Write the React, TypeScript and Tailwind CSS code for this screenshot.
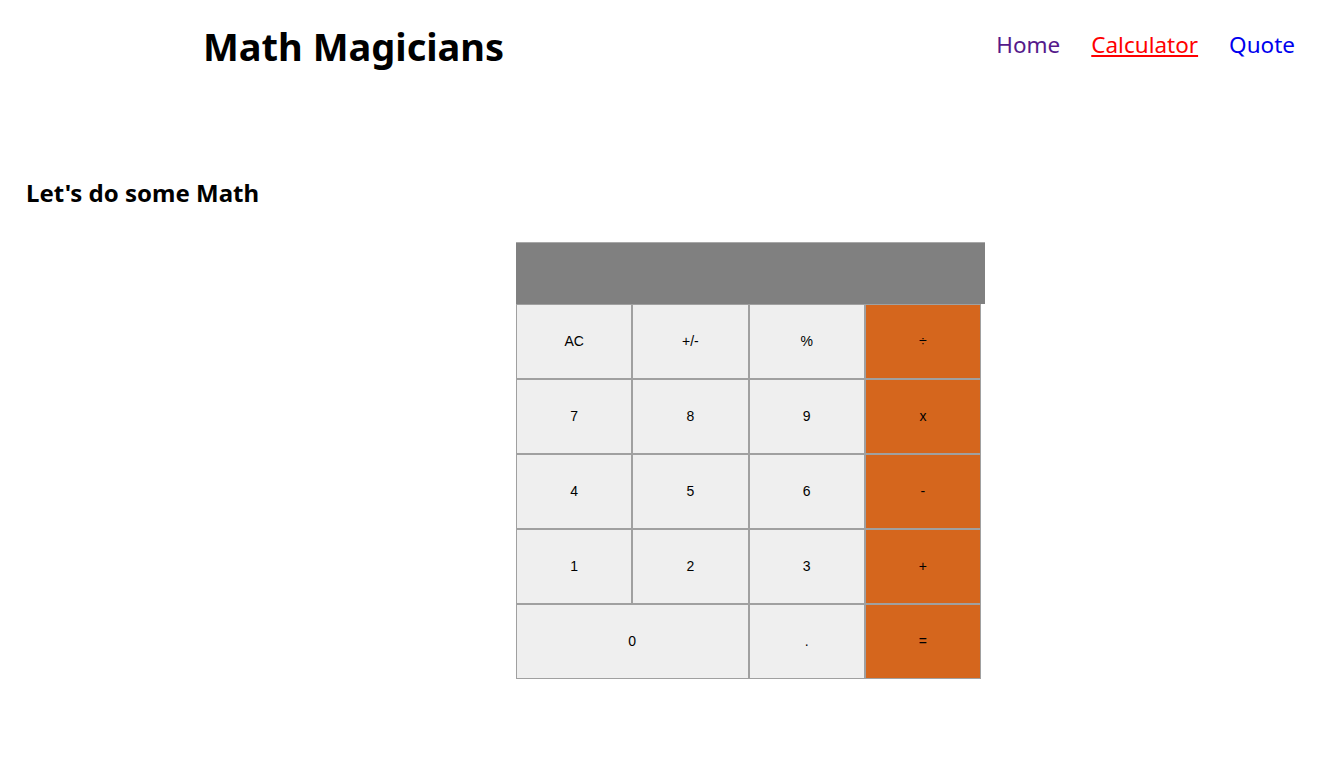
import React from "react";

const rows: { label: string; span?: boolean; op?: boolean }[][] = [
  [{ label: "AC" }, { label: "+/-" }, { label: "%" }, { label: "÷", op: true }],
  [{ label: "7" }, { label: "8" }, { label: "9" }, { label: "x", op: true }],
  [{ label: "4" }, { label: "5" }, { label: "6" }, { label: "-", op: true }],
  [{ label: "1" }, { label: "2" }, { label: "3" }, { label: "+", op: true }],
  [{ label: "0", span: true }, { label: "." }, { label: "=", op: true }],
];

const Calculator = () => (
  <div className="w-[469px]">
    <div className="h-[62px] border-t border-[#a8a8a8] bg-[#808080]" />
    <div className="grid w-[465px] grid-cols-4">
      {rows.flat().map((b, i) => (
        <button
          key={i}
          className={`h-[75px] border border-[#a0a0a0] text-[14px] text-black ${
            b.span ? "col-span-2" : ""
          } ${b.op ? "bg-[#d5661d]" : "bg-[#efefef]"}`}
          style={{ fontFamily: "'Liberation Sans', Arial, sans-serif" }}
        >
          {b.label}
        </button>
      ))}
    </div>
  </div>
);

export default function App() {
  return (
    <div className="min-h-[777px] bg-white font-['Noto_Sans',sans-serif] text-black">
      <header className="flex h-[92px] items-center justify-between pl-[203px] pr-[37px]">
        <h1 className="text-[38px] font-bold">Math Magicians</h1>
        <nav className="-mt-[2px] flex gap-[31px] text-[22.5px]">
          <a className="text-[#551a8b]">Home</a>
          <a className="text-[#ff0000] underline">Calculator</a>
          <a className="text-[#0000ee]">Quote</a>
        </nav>
      </header>
      <main className="pt-[83px]">
        <h2 className="pl-[26px] text-[24px] font-bold">Let's do some Math</h2>
        <div className="ml-[516px] mt-[31px]">
          <Calculator />
        </div>
      </main>
    </div>
  );
}
